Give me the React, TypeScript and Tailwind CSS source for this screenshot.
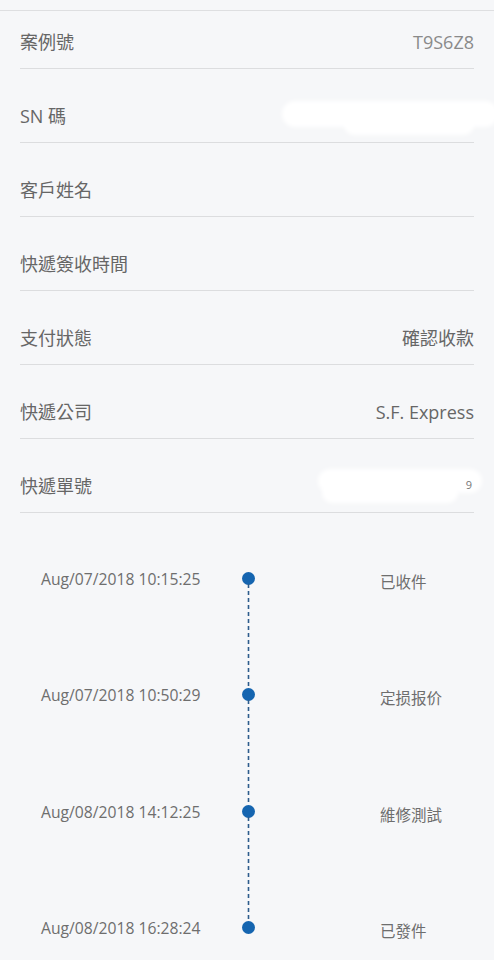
const rows = [
  { label: "案例號", value: "T9S6Z8", tone: "text-[#8a8a8a]" },
  { label: "SN 碼", value: "", mask: "sn" },
  { label: "客戶姓名", value: "" },
  { label: "快遞簽收時間", value: "" },
  { label: "支付狀態", value: "確認收款" },
  { label: "快遞公司", value: "S.F. Express" },
  { label: "快遞單號", value: "", mask: "track" },
];

const steps = [
  { time: "Aug/07/2018 10:15:25", status: "已收件" },
  { time: "Aug/07/2018 10:50:29", status: "定损报价" },
  { time: "Aug/08/2018 14:12:25", status: "維修測試" },
  { time: "Aug/08/2018 16:28:24", status: "已發件" },
];

// white smudges that hide the private values
function Mask({ kind }: { kind?: string }) {
  if (kind === "sn") {
    return (
      <div aria-hidden="true">
        <div className="absolute right-[-24px] top-[32px] h-[26px] w-[216px] rounded-full bg-white blur-[2px]" />
        <div className="absolute right-[0px] top-[46px] h-[20px] w-[130px] rounded-full bg-white blur-[2px]" />
      </div>
    );
  }
  if (kind === "track") {
    return (
      <div aria-hidden="true">
        <div className="absolute right-[-8px] top-[30px] h-[24px] w-[164px] rounded-full bg-white blur-[2px]" />
        <div className="absolute right-[16px] top-[44px] h-[20px] w-[136px] rounded-full bg-white blur-[2px]" />
        <span className="absolute right-[2px] top-[38px] text-[11px] text-[#777]">9</span>
      </div>
    );
  }
  return null;
}

export default function App() {
  return (
    <div
      className="min-h-screen bg-[#f6f7f9] text-[#666]"
      style={{ fontFamily: '"Open Sans", "Noto Sans CJK TC", sans-serif' }}
    >
      <div className="h-[11px] border-b border-[#dedfe1]" />

      <div className="px-5">
        {rows.map((r, i) => (
          <div
            key={r.label}
            className={`relative flex items-center justify-between border-b border-[#dcdddf] pb-[14px] ${
              i === 0 ? "pt-[19px]" : "pt-[35px]"
            }`}
          >
            <span className="text-[18px] leading-[24px]">{r.label}</span>
            <span className={`text-[18px] leading-[24px] ${r.tone ?? ""}`}>{r.value}</span>
            <Mask kind={r.mask} />
          </div>
        ))}
      </div>

      <div className="pt-[54px] pl-[41px]">
        {steps.map((s, i) => (
          <div
            key={s.time}
            className="grid h-[116.3px] grid-cols-[201px_13px_1fr] items-start last:h-auto"
          >
            <span className="text-[15.7px] leading-[24px] text-[#6e6e6e]">{s.time}</span>
            <div className="relative h-[24px]">
              <span className="absolute left-0 top-[5px] h-[13px] w-[13px] rounded-full bg-[#1565b0]" />
              {i < steps.length - 1 && (
                <svg
                  className="absolute left-[5px] top-[17px]"
                  width="3"
                  height="105"
                  aria-hidden="true"
                >
                  <line
                    x1="1.5"
                    y1="0"
                    x2="1.5"
                    y2="105"
                    stroke="#2d5c8c"
                    strokeWidth="1.6"
                    strokeDasharray="4 3"
                  />
                </svg>
              )}
            </div>
            <span className="mt-[3px] pl-[125px] text-[15.5px] leading-[24px] text-[#6e6e6e]">
              {s.status}
            </span>
          </div>
        ))}
      </div>
    </div>
  );
}
